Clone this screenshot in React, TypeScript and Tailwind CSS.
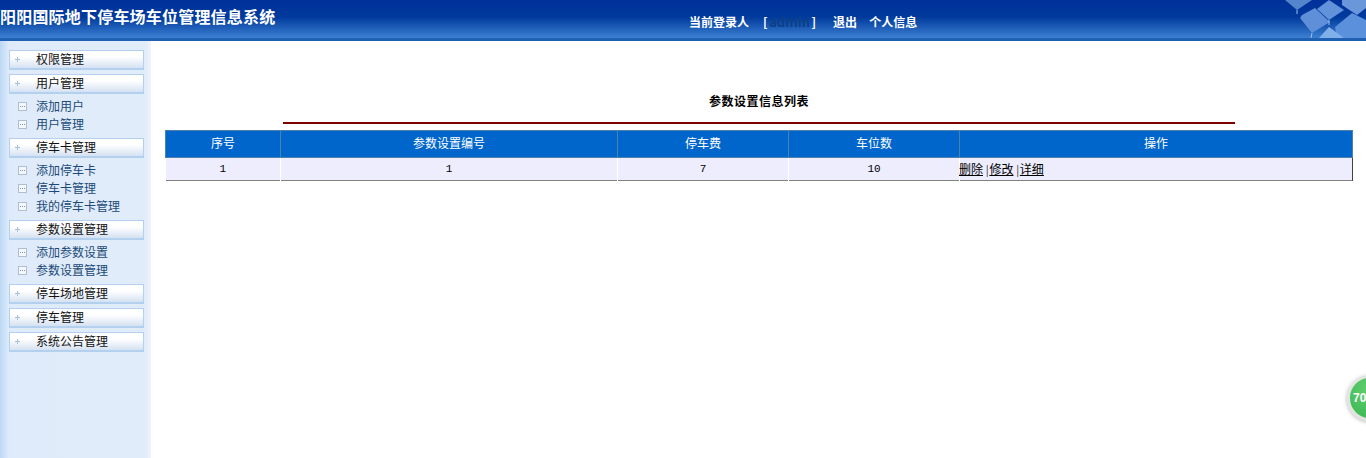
import React from "react";

const cjk = "font-['Liberation_Serif','Noto_Sans_CJK_SC',sans-serif]";

const menu = [
  { title: "权限管理", items: [] },
  { title: "用户管理", items: ["添加用户", "用户管理"] },
  { title: "停车卡管理", items: ["添加停车卡", "停车卡管理", "我的停车卡管理"] },
  { title: "参数设置管理", items: ["添加参数设置", "参数设置管理"] },
  { title: "停车场地管理", items: [] },
  { title: "停车管理", items: [] },
  { title: "系统公告管理", items: [] },
];

const columns = ["序号", "参数设置编号", "停车费", "车位数", "操作"];

const KeyboardArt = () => (
  <svg className="absolute top-0 right-0 w-[84px] h-[38px]" viewBox="0 0 84 38">
    <polygon points="3,0 30,0 15,10" fill="#5384cc" />
    <polygon points="35,9 47,0 62,10 47,20" fill="#6292da" />
    <polygon points="60,0 84,0 84,8 75,15 60,5" fill="#6a97da" />
    <polygon points="20,15 33,8 48,22 30,33 18,18" fill="#5f8fd8" />
    <polygon points="53,27 70,13 84,20 84,38 55,38" fill="#5a90dc" />
    <polygon points="37,38 47,27 62,38" fill="#7fb0ea" />
    <path d="M15 10 L15 14 M47 20 L47 25 M30 33 L29 38" stroke="#9fc0ee" strokeWidth="1" />
  </svg>
);

const PlusIcon = () => (
  <svg className="ml-[5px] mr-4 shrink-0" width="5" height="5" viewBox="0 0 5 5">
    <path d="M2.5 0V5M0 2.5H5" stroke="#a9c0da" strokeWidth="1" />
  </svg>
);

const ItemIcon = () => (
  <svg className="ml-[9px] mr-[9px] shrink-0" width="9" height="9" viewBox="0 0 9 9">
    <rect x="0.5" y="0.5" width="8" height="8" fill="#f4f8fd" stroke="#aebfd2" />
    <path d="M2 4.5H3M4 4.5H5M6 4.5H7" stroke="#7f96b2" strokeWidth="1" />
  </svg>
);

const Sidebar = () => (
  <aside className="w-[151px] shrink-0 pt-[9px] pl-[9px] bg-[linear-gradient(to_right,#bcd8f5_0px,#dfebfa_9px,#e1ecfa_146px,#eef5fd_151px)]">
    <div className="flex flex-col gap-1 w-[135px]">
      {menu.map((group) => (
        <div key={group.title} className="flex flex-col">
          <div className="flex items-center h-5 border border-[#b3d0ee] border-b-2 bg-[linear-gradient(to_bottom,#ffffff_0%,#ffffff_35%,#d5e1f2_100%)] text-xs text-[#111111]">
            <PlusIcon />
            <span>{group.title}</span>
          </div>
          {group.items.length > 0 && (
            <div className="flex flex-col pt-[3px] pb-px">
              {group.items.map((item) => (
                <div key={item} className="flex items-center h-[18px] text-xs text-[#1b4a78]">
                  <ItemIcon />
                  <span className="mt-[2px]">{item}</span>
                </div>
              ))}
            </div>
          )}
        </div>
      ))}
    </div>
  </aside>
);

export default function App() {
  return (
    <div className={`relative flex flex-col h-screen overflow-hidden bg-white ${cjk}`}>
      <header className="relative flex items-start h-[41px] shrink-0 border-b-[3px] border-[#2060b2] bg-[linear-gradient(to_bottom,#00309a_0%,#003a9c_45%,#3c80d2_100%)] text-white font-['Noto_Sans_CJK_SC',sans-serif]">
        <h1 className="w-[689px] pt-[4px] text-base leading-6 font-bold whitespace-nowrap tracking-[0.2px]">
          阳阳国际地下停车场车位管理信息系统
        </h1>
        <nav className="flex items-center h-4 mt-[14px] text-xs font-bold">
          <span>当前登录人</span>
          <span className="ml-[14px]">[</span>
          <span className="w-[44px] text-center text-[13px] text-[#0c3f86]">admin</span>
          <span>]</span>
          <a className="ml-[17px]">退出</a>
          <a className="ml-3">个人信息</a>
        </nav>
        <KeyboardArt />
      </header>

      <div className="flex flex-1">
        <Sidebar />
        <main className="flex-1 pl-[14px] pt-[51px]">
          <div className="w-[1188px]">
            <h2 className="h-[18px] text-center text-xs leading-[18px] font-bold tracking-[0.5px] text-black font-['Noto_Sans_CJK_SC',sans-serif]">
              参数设置信息列表
            </h2>
            <div className="h-[2px] w-[952px] mt-[12px] ml-[118px] bg-[#800000]" />
            <table className="w-full mt-[6px] table-fixed border-collapse text-xs">
              <colgroup>
                <col className="w-[115px]" />
                <col className="w-[337px]" />
                <col className="w-[171px]" />
                <col className="w-[171px]" />
                <col />
              </colgroup>
              <thead>
                <tr className="h-[27px] bg-[#0066cc] text-white">
                  {columns.map((name) => (
                    <th key={name} className="border border-[#4d80aa] font-normal text-center">
                      {name}
                    </th>
                  ))}
                </tr>
              </thead>
              <tbody>
                <tr className="h-[23px] bg-[#eeedfd] text-black border-b border-[#808080]">
                  <td className="pt-px border-r border-white text-center font-['Liberation_Mono',monospace] text-[11px]">1</td>
                  <td className="pt-px border-r border-white text-center font-['Liberation_Mono',monospace] text-[11px]">1</td>
                  <td className="pt-px border-r border-white text-center font-['Liberation_Mono',monospace] text-[11px]">7</td>
                  <td className="pt-px border-r border-white text-center font-['Liberation_Mono',monospace] text-[11px]">10</td>
                  <td className="border-r border-[#404040] text-left">
                    <div className="-ml-px mt-px">
                      <a className="underline">删除</a> |<a className="ml-px underline">修改</a> |<a className="ml-px underline">详细</a>
                    </div>
                  </td>
                </tr>
              </tbody>
            </table>
          </div>
        </main>
      </div>

      <div className="absolute top-[375px] left-[1347px] flex items-center w-[46px] h-[46px] pl-[3px] pb-px rounded-full border-[3px] border-[#dfe5df] bg-[radial-gradient(circle_at_50%_30%,#63cf72,#38b64f)] shadow-[0_1px_4px_rgba(0,0,0,0.3)] text-xs font-bold text-white font-['Liberation_Sans',sans-serif]">
        70
      </div>
    </div>
  );
}
